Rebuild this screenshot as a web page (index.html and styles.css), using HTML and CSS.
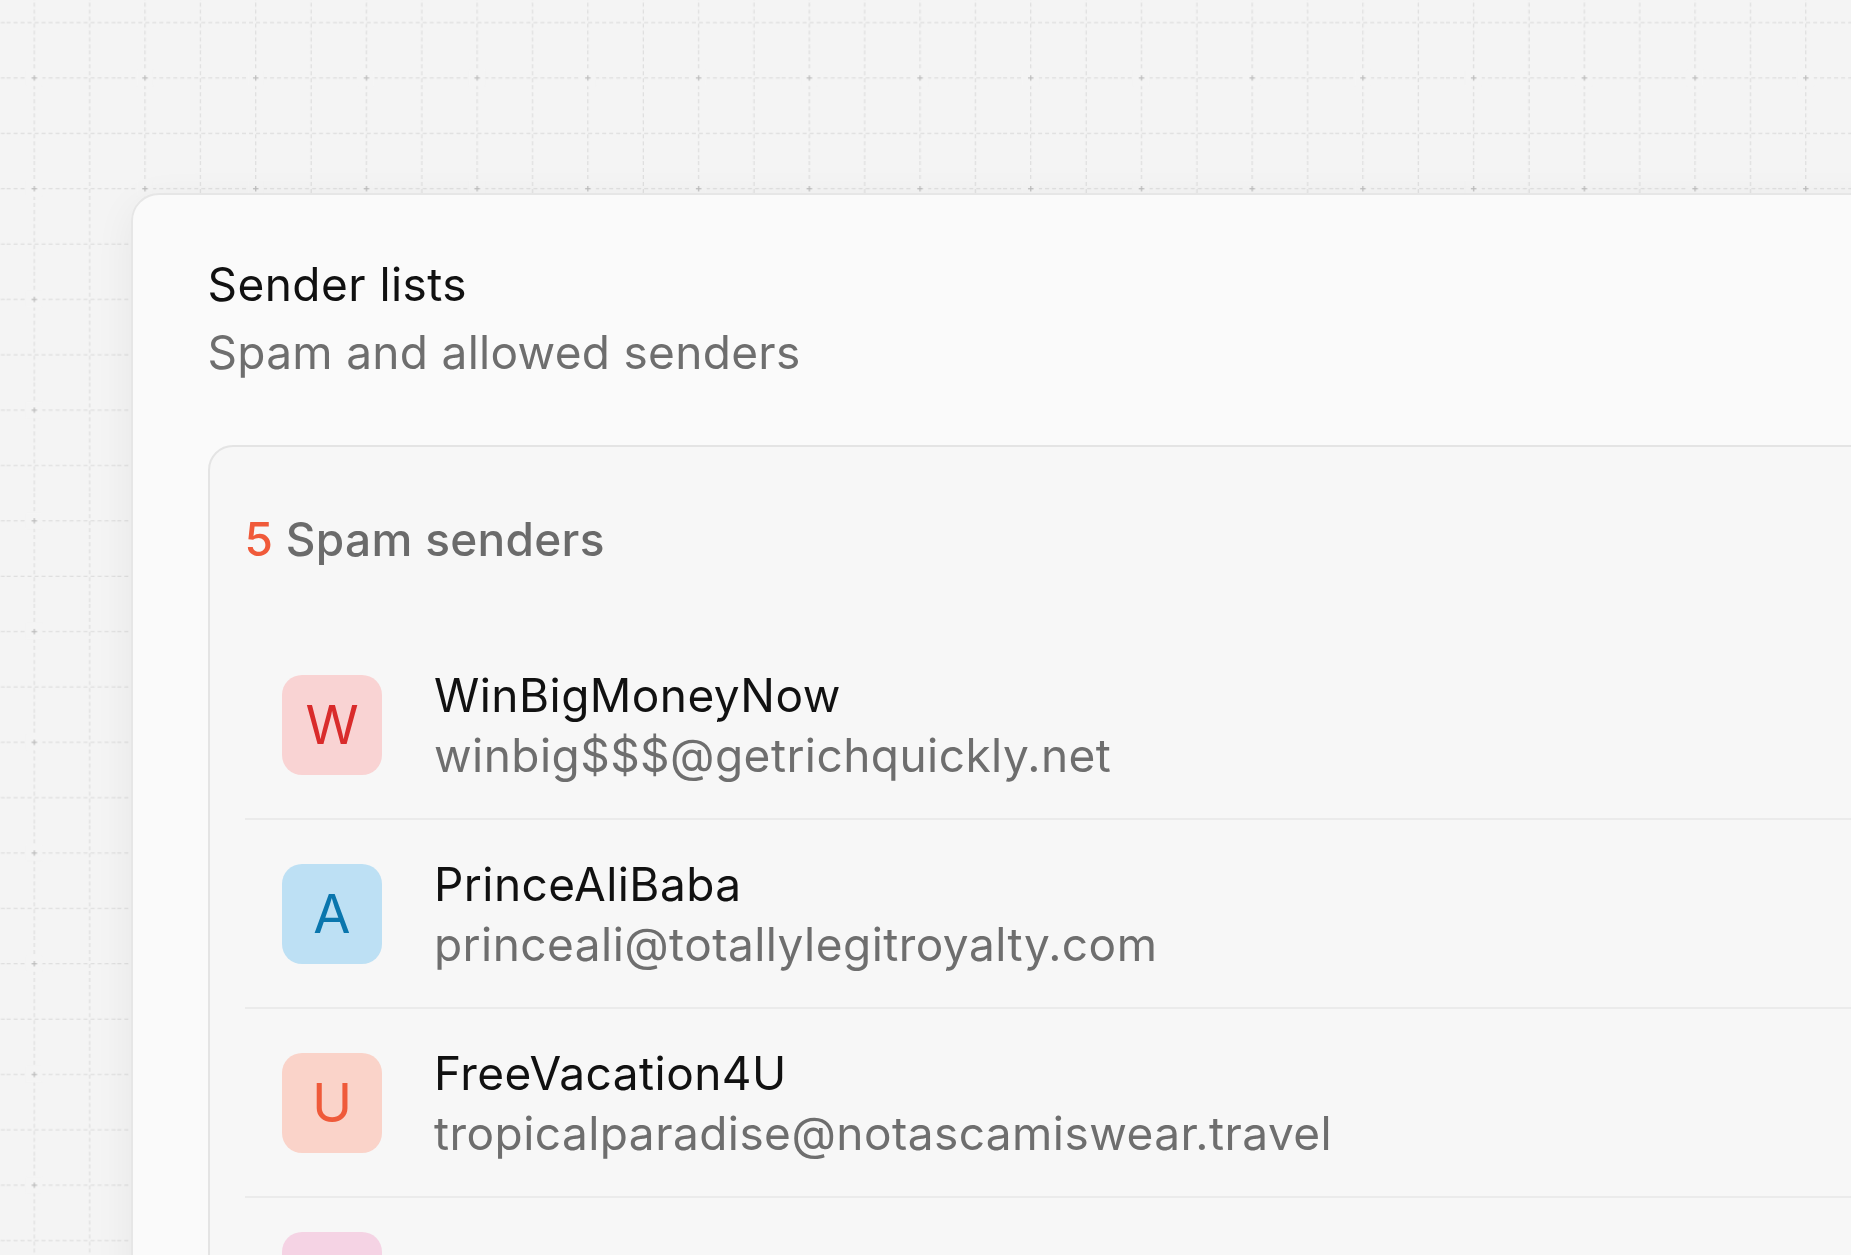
FILE: index.html
```
<!DOCTYPE html>
<html lang="en">
<head>
<meta charset="utf-8">
<title>Sender lists</title>
<link rel="stylesheet" href="styles.css">
</head>
<body>
<svg class="grid-bg" aria-hidden="true">
  <defs>
    <pattern id="grid" x="6.62" y="50.32" width="110.72" height="110.72" patternUnits="userSpaceOnUse">
      <g stroke="#d9d9d9" stroke-width="1" stroke-dasharray="4 3" fill="none">
        <line x1="0" y1="27.68" x2="110.72" y2="27.68"/>
        <line x1="0" y1="83.04" x2="110.72" y2="83.04"/>
        <line x1="27.68" y1="0" x2="27.68" y2="110.72"/>
        <line x1="83.04" y1="0" x2="83.04" y2="110.72"/>
      </g>
      <rect x="19.68" y="19.68" width="16" height="16" fill="#f4f4f4"/>
      <g stroke="#bcbcbc" stroke-width="1.2">
        <line x1="24.9" y1="27.68" x2="30.46" y2="27.68"/>
        <line x1="27.68" y1="24.9" x2="27.68" y2="30.46"/>
      </g>
    </pattern>
  </defs>
  <rect width="100%" height="100%" fill="url(#grid)"/>
</svg>

<main class="stage">
  <section class="card">
    <header class="card-head">
      <h1 class="title">Sender lists</h1>
      <p class="subtitle">Spam and allowed senders</p>
    </header>

    <div class="panel">
      <h2 class="panel-title"><span class="count">5</span> Spam senders</h2>
      <ul class="sender-list">
        <li class="sender">
          <div class="avatar avatar-red">W</div>
          <div class="sender-text">
            <div class="sender-name">WinBigMoneyNow</div>
            <div class="sender-email">winbig$$$@getrichquickly.net</div>
          </div>
        </li>
        <li class="sender">
          <div class="avatar avatar-blue">A</div>
          <div class="sender-text">
            <div class="sender-name">PrinceAliBaba</div>
            <div class="sender-email">princeali@totallylegitroyalty.com</div>
          </div>
        </li>
        <li class="sender">
          <div class="avatar avatar-orange">U</div>
          <div class="sender-text">
            <div class="sender-name">FreeVacation4U</div>
            <div class="sender-email">tropicalparadise@notascamiswear.travel</div>
          </div>
        </li>
        <li class="sender">
          <div class="avatar avatar-pink">D</div>
          <div class="sender-text">
            <div class="sender-name">Dr. MiracleCure</div>
          </div>
        </li>
      </ul>
    </div>
  </section>
</main>
</body>
</html>
```

FILE: styles.css
```
html, body {
  margin: 0;
  padding: 0;
  overflow: hidden;
  height: 100%;
}

body {
  background: #f4f4f4;
  font-family: "Inter", "Noto Sans", "Liberation Sans", sans-serif;
  color: #111111;
}

.grid-bg {
  position: fixed;
  top: 0;
  left: 0;
  width: 100%;
  height: 100%;
  z-index: 0;
}

.stage {
  position: relative;
  z-index: 1;
  padding: 192.7px 0 0 131px;
}

.card {
  width: 2000px;
  box-sizing: border-box;
  background: #fafafa;
  border: 2.7px solid #e6e6e6;
  border-radius: 28px;
  padding: 55.6px 0 200px 74.5px;
  box-shadow: 0 10px 40px rgba(0, 0, 0, 0.06);
}

.title,
.subtitle {
  margin: 0;
  font-size: 46px;
  line-height: 68px;
  font-weight: 400;
  letter-spacing: 0.45px;
}

.title {
  color: #111111;
}

.subtitle {
  color: #6e6e6e;
  letter-spacing: 0.3px;
}

.panel {
  margin-top: 59px;
  background: #f7f7f7;
  border: 2.5px solid #e4e4e4;
  border-radius: 25px;
  padding: 63.5px 0 60px 35px;
}

.panel-title {
  margin: 0;
  font-size: 46px;
  line-height: 56px;
  font-weight: 500;
  color: #6b6b6b;
  letter-spacing: 0.3px;
}

.count {
  color: #f05a3a;
}

.sender-list {
  list-style: none;
  margin: 64.5px 0 0 0;
  padding: 0;
}

.sender {
  display: flex;
  align-items: center;
  gap: 52px;
  padding: 33.5px 0 33.5px 37.5px;
  border-bottom: 2.5px solid #ebebeb;
}

.avatar {
  flex: none;
  width: 100px;
  height: 100px;
  border-radius: 20px;
  display: flex;
  align-items: center;
  justify-content: center;
  font-size: 54px;
  font-weight: 400;
  line-height: 1;
}

.avatar-red { background: #f9d3d3; color: #d92b2b; }
.avatar-blue { background: #bde0f4; color: #0a76ad; }
.avatar-orange { background: #fad3c9; color: #ef5a3a; }
.avatar-pink { background: #f5d3e4; color: #c2367a; }

.sender-text {
  display: flex;
  flex-direction: column;
}

.sender-name,
.sender-email {
  font-size: 46px;
  line-height: 60px;
  white-space: nowrap;
  letter-spacing: 0.45px;
}

.sender-name {
  color: #111111;
}

.sender-email {
  color: #6e6e6e;
}
```
